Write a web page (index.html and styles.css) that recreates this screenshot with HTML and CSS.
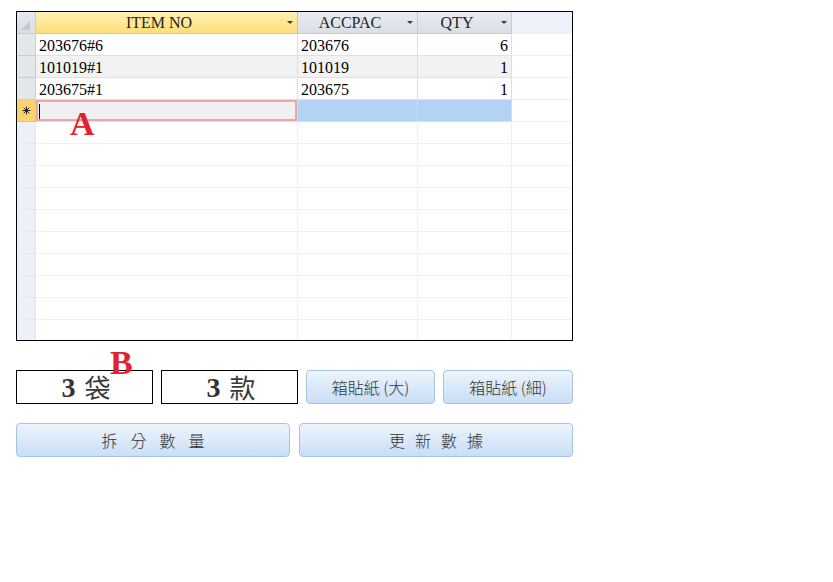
FILE: index.html
```html
<!DOCTYPE html>
<html lang="zh-Hant">
<head>
<meta charset="utf-8">
<title>Datasheet</title>
<link rel="stylesheet" href="styles.css">
</head>
<body>
<div class="page">
  <div class="sheet">
    <div class="cell sel corner"><svg width="9" height="9" viewBox="0 0 9 9"><path d="M9 0 L9 9 L0 9 Z" fill="#c3c8cf"/></svg></div>
    <div class="cell hd active"><span class="lbl">ITEM NO</span><span class="arr"></span></div>
    <div class="cell hd"><span class="lbl">ACCPAC</span><span class="arr"></span></div>
    <div class="cell hd"><span class="lbl">QTY</span><span class="arr"></span></div>
    <div class="cell hd blank"></div>

    <div class="cell sel rec"></div>
    <div class="cell d">203676#6</div>
    <div class="cell d">203676</div>
    <div class="cell d num">6</div>
    <div class="cell x"></div>

    <div class="cell sel rec"></div>
    <div class="cell d alt">101019#1</div>
    <div class="cell d alt">101019</div>
    <div class="cell d alt num">1</div>
    <div class="cell x"></div>

    <div class="cell sel rec"></div>
    <div class="cell d">203675#1</div>
    <div class="cell d">203675</div>
    <div class="cell d num">1</div>
    <div class="cell x"></div>

    <div class="cell sel new"><svg width="9" height="9" viewBox="0 0 9 9"><path d="M4.5 0.5 V8.5 M0.5 4.5 H8.5 M1.7 1.7 L7.3 7.3 M7.3 1.7 L1.7 7.3" stroke="#222" stroke-width="1" fill="none"/></svg></div>
    <div class="cell d focus"><span class="caret"></span></div>
    <div class="cell d picked"></div>
    <div class="cell d picked"></div>
    <div class="cell x"></div>

    <div class="cell sel e"></div><div class="cell e"></div><div class="cell e"></div><div class="cell e"></div><div class="cell e x"></div>
    <div class="cell sel e"></div><div class="cell e"></div><div class="cell e"></div><div class="cell e"></div><div class="cell e x"></div>
    <div class="cell sel e"></div><div class="cell e"></div><div class="cell e"></div><div class="cell e"></div><div class="cell e x"></div>
    <div class="cell sel e"></div><div class="cell e"></div><div class="cell e"></div><div class="cell e"></div><div class="cell e x"></div>
    <div class="cell sel e"></div><div class="cell e"></div><div class="cell e"></div><div class="cell e"></div><div class="cell e x"></div>
    <div class="cell sel e"></div><div class="cell e"></div><div class="cell e"></div><div class="cell e"></div><div class="cell e x"></div>
    <div class="cell sel e"></div><div class="cell e"></div><div class="cell e"></div><div class="cell e"></div><div class="cell e x"></div>
    <div class="cell sel e"></div><div class="cell e"></div><div class="cell e"></div><div class="cell e"></div><div class="cell e x"></div>
    <div class="cell sel e"></div><div class="cell e"></div><div class="cell e"></div><div class="cell e"></div><div class="cell e x"></div>
    <div class="cell sel e"></div><div class="cell e"></div><div class="cell e"></div><div class="cell e"></div><div class="cell e x"></div>
  </div>

  <div class="controls">
    <div class="box"><span class="n">3</span><span class="u">袋</span></div>
    <div class="box"><span class="n">3</span><span class="u">款</span></div>
    <button class="btn">箱貼紙 (大)</button>
    <button class="btn">箱貼紙 (細)</button>
  </div>
  <div class="actions">
    <button class="btn wide">拆分數量</button>
    <button class="btn wide alt-sp">更新數據</button>
  </div>

  <span class="mark mark-a">A</span>
  <span class="mark mark-b">B</span>
</div>
</body>
</html>
```

FILE: styles.css
```css
html, body {
  margin: 0;
  padding: 0;
  background: #fff;
}

.page {
  position: relative;
  padding: 11px 0 0 16px;
  width: 557px;
}

.sheet {
  display: grid;
  grid-template-columns: 19px 262px 120px 94px 60px;
  grid-auto-rows: 22px;
  width: 555px;
  height: 328px;
  overflow: hidden;
  border: 1px solid #000;
  font-family: "Liberation Serif", "Times New Roman", serif;
  font-size: 16px;
  line-height: 22px;
  color: #000;
}

.cell {
  box-sizing: border-box;
  border-right: 1px solid #e4e4e4;
  border-bottom: 1px solid #e0e0e0;
  white-space: nowrap;
  overflow: hidden;
}

.sel {
  border-right: 1px solid #c9ced6;
  border-bottom: 1px solid #c9ced6;
  background: #e3e6eb;
}

.corner {
  background: linear-gradient(#e6e9ee, #d9dee5);
  display: flex;
  align-items: flex-end;
  justify-content: flex-end;
  padding: 0 5px 3px 0;
}

.hd {
  display: flex;
  align-items: center;
  background: linear-gradient(#e9ecf0, #dadfe6);
  border-right: 1px solid #c8cdd5;
  border-bottom: 1px solid #c8cdd5;
  color: #222;
}

.hd.active {
  background: linear-gradient(#fff0b4, #fddf78);
  border-right-color: #d9c48a;
  border-bottom-color: #e7c86a;
}

.hd.blank {
  background: #eef1f9;
  border-right: none;
  border-bottom: 1px solid #eef1f9;
}

.lbl {
  flex: 1;
  text-align: center;
  padding-top: 1px;
}

.arr {
  width: 15px;
  display: flex;
  justify-content: center;
}

.arr::before {
  content: "";
  width: 0;
  height: 0;
  border-left: 3px solid transparent;
  border-right: 3px solid transparent;
  border-top: 3px solid #3a3a3a;
}

.d {
  padding: 1px 0 0 3px;
  background: #fff;
  border-right-color: #dedede;
}

.d.alt {
  background: #f2f2f2;
}

.num {
  text-align: right;
  padding-right: 3px;
}

.x {
  border-right: none;
  background: #fff;
  border-bottom-color: #eeeeee;
}

.new {
  background: #fcd46e;
  border-bottom-color: #e3c27a;
  display: flex;
  align-items: center;
  justify-content: center;
}

.focus {
  background: #f0f0f0;
  box-shadow: inset 0 0 0 2px #eba8a8;
  display: flex;
  align-items: center;
  padding-left: 3px;
}

.caret {
  display: block;
  width: 1px;
  height: 15px;
  background: #000;
}

.picked {
  background: #b3d3f5;
  border-right-color: #c8dff7;
  border-bottom-color: #c8dff7;
}

.e {
  border-right-color: #f0f0f0;
  border-bottom-color: #f1f1f1;
}

.sel.e {
  background: #eef0f8;
  border-right-color: #e2e5ef;
  border-bottom-color: #e6e9f2;
}

.controls {
  display: grid;
  grid-template-columns: 137px 137px 129px 130px;
  grid-template-rows: 34px;
  column-gap: 8px;
  margin-top: 29px;
}

.box {
  box-sizing: border-box;
  height: 34px;
  border: 1px solid #000;
  background: #fff;
  display: flex;
  align-items: center;
  justify-content: center;
  gap: 9px;
  color: #333;
  line-height: 30px;
  padding-left: 3px;
}

.box .n {
  font-family: "Liberation Serif", "Times New Roman", serif;
  font-weight: bold;
  font-size: 28px;
  position: relative;
  top: 1px;
}

.box .u {
  font-family: "Noto Sans CJK TC", sans-serif;
  font-weight: 400;
  font-size: 26px;
  color: #3a3a3a;
}

.btn {
  box-sizing: border-box;
  height: 34px;
  margin: 0;
  border: 1px solid #a6c3e2;
  border-radius: 4px;
  background: linear-gradient(#edf4fc, #c9def6);
  font-family: "Noto Sans CJK TC", "Noto Sans", sans-serif;
  font-weight: 300;
  font-size: 16px;
  line-height: 20px;
  color: #333;
  padding: 0;
}

.actions {
  display: grid;
  grid-template-columns: 274px 274px;
  grid-template-rows: 34px;
  column-gap: 9px;
  margin-top: 19px;
}

.wide {
  letter-spacing: 13px;
  text-indent: 13px;
}

.wide.alt-sp {
  letter-spacing: 10px;
  text-indent: 10px;
}

.mark {
  position: absolute;
  font-family: "Liberation Serif", "Times New Roman", serif;
  font-weight: bold;
  font-size: 34px;
  line-height: 1;
  color: #e3202b;
}

.mark-a {
  left: 70px;
  top: 107px;
}

.mark-b {
  left: 110px;
  top: 346px;
}
```
